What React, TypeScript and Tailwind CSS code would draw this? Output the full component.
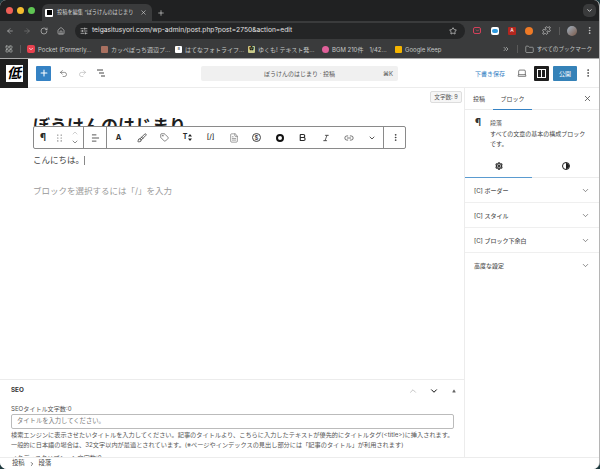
import React from "react";
import { ArrowLeft, ArrowRight, RotateCw, Home, Star, ChevronDown, ChevronUp, ChevronsRight, Folder, Plus, X, MoreVertical, LayoutGrid, SlidersHorizontal, Undo2, Redo2, Laptop, Bold, Italic, Link2, Tag, Brush, Settings, ChevronRight, Puzzle, FileText, Triangle } from "lucide-react";

const font = "font-['Inter','Noto_Sans_CJK_JP',sans-serif]";

function Bookmark({ icon, label, w }: { icon: React.ReactNode; label: string; w: string }) {
  return (
    <div className={`flex items-center gap-[3px] ${w} shrink-0`}>
      {icon}
      <span className="text-[6px] text-[#c4c7c5] whitespace-nowrap">{label}</span>
    </div>
  );
}

function Fav({ c, children }: { c: string; children?: React.ReactNode }) {
  return <span className={`w-[7px] h-[7px] rounded-[1px] flex items-center justify-center text-[5px] text-black shrink-0 ${c}`}>{children}</span>;
}

function Browser() {
  return (
    <div className="bg-[#202122] shrink-0">
      <div className="h-[21px] flex items-end pl-[42px] relative">
        <div className="absolute left-[6px] top-[7px] flex gap-[4px]">
          <span className="w-[7px] h-[7px] rounded-full bg-[#ee5f57]" />
          <span className="w-[7px] h-[7px] rounded-full bg-[#f5bd2f]" />
          <span className="w-[7px] h-[7px] rounded-full bg-[#5fc553]" />
        </div>
        <div className="w-[110px] h-[17px] bg-[#3a3b3c] rounded-t-[6px] flex items-center pl-[3px] pr-[5px] gap-[4px]">
          <span className="w-[8px] h-[8px] bg-white rounded-[1px] flex items-center justify-center shrink-0"><span className="w-[5px] h-[5px] bg-black" /></span>
          <span className="text-[5.2px] text-[#d8d8d8] whitespace-nowrap flex-1">投稿を編集 “ぼうけんのはじまり</span>
          <X size={7} strokeWidth={2} className="text-[#dddddd] shrink-0" />
        </div>
        <Plus size={8} strokeWidth={2} className="text-[#d5d5d5] ml-[5px] mb-[4px]" />
        <div className="absolute right-[3px] top-[4px] w-[13px] h-[13px] rounded-[5px] bg-[#3a3b3c] flex items-center justify-center">
          <ChevronDown size={7} strokeWidth={3} className="text-[#dddddd]" />
        </div>
      </div>
      <div className="h-[19px] bg-[#3a3b3c] flex items-center pl-[6px]">
        <ArrowLeft size={8} strokeWidth={2} className="text-[#b9b9b9]" />
        <ArrowRight size={8} strokeWidth={2} className="text-[#7a7a7a] ml-[9px]" />
        <RotateCw size={8} strokeWidth={2} className="text-[#c9c9c9] ml-[9px]" />
        <Home size={8} strokeWidth={2} className="text-[#c9c9c9] ml-[9px]" />
        <div className="ml-[10px] w-[390px] h-[16px] bg-[#242526] rounded-full flex items-center pl-[5px] pr-[8px]">
          <SlidersHorizontal size={8} strokeWidth={2} className="text-[#d8d8d8]" />
          <span className="ml-[4px] text-[6.7px] text-[#e3e3e3] whitespace-nowrap flex-1">teigasitusyori.com/wp-admin/post.php?post=2750&amp;action=edit</span>
          <Star size={8} strokeWidth={2} className="text-[#e3e3e3]" />
        </div>
        <span className="ml-[8px] w-[8px] h-[7px] rounded-[2px] border border-[#d4405a] flex items-center justify-center"><ChevronDown size={5} strokeWidth={3} className="text-[#e4556a]" /></span>
        <span className="ml-[10px] w-[8px] h-[8px] rounded-[2px] bg-white flex items-center justify-center"><span className="w-[6px] h-[4px] rounded-full bg-[#2f9be0]" /></span>
        <span className="ml-[9px] w-[8px] h-[8px] rounded-[1px] bg-[#b3261e] flex items-center justify-center text-[5px] text-white">A</span>
        <span className="ml-[9px] w-[8px] h-[8px] rounded-full bg-[#ee7a26]" />
        <Puzzle size={9} strokeWidth={1.8} className="ml-[9px] text-[#d8d8d8]" />
        <span className="ml-[8px] w-px h-[8px] bg-[#5a5a5a]" />
        <span className="ml-[7px] w-[10px] h-[10px] rounded-full bg-[linear-gradient(135deg,#9fb1c2,#7c5a48)]" />
        <MoreVertical size={9} strokeWidth={2} className="ml-[8px] text-[#d8d8d8]" />
      </div>
      <div className="h-[18px] bg-[#3a3b3c] flex items-center pl-[5px] pr-[7px]">
        <LayoutGrid size={8} strokeWidth={1.8} className="text-[#c4c7c5] shrink-0" />
        <span className="ml-[7px] mr-[6px] w-px h-[8px] bg-[#5a5a5a] shrink-0" />
        <Bookmark w="w-[74px]" icon={<span className="w-[8px] h-[8px] rounded-[2px] bg-[#e8414f] flex items-center justify-center"><ChevronDown size={6} strokeWidth={3} className="text-white" /></span>} label="Pocket (Formerly..." />
        <Bookmark w="w-[74px]" icon={<Fav c="bg-[#a87060]" />} label="カッペぼっち週辺プ..." />
        <Bookmark w="w-[73px]" icon={<Fav c="bg-white">॥</Fav>} label="はてなフォトライフ..." />
        <Bookmark w="w-[74px]" icon={<Fav c="bg-[#c9c98a]">✿</Fav>} label="ゆくも! テキスト発..." />
        <Bookmark w="w-[73px]" icon={<span className="w-[7px] h-[7px] rounded-full bg-[#e0609a] shrink-0" />} label="BGM 210件　1/42..." />
        <Bookmark w="w-[60px]" icon={<span className="w-[7px] h-[7px] rounded-[1px] bg-[#f4b400] shrink-0" />} label="Google Keep" />
        <ChevronsRight size={8} strokeWidth={2} className="ml-auto text-[#c4c7c5] shrink-0" />
        <span className="mx-[7px] w-px h-[8px] bg-[#5a5a5a] shrink-0" />
        <Folder size={9} strokeWidth={1.6} className="text-[#c4c7c5] shrink-0" />
        <span className="ml-[3px] text-[5.6px] text-[#c4c7c5] whitespace-nowrap">すべてのブックマーク</span>
      </div>
    </div>
  );
}

function Header() {
  return (
    <div className="h-[30px] shrink-0 flex items-center border-t border-t-[#aaaaaa] border-b border-b-[#ececec] bg-white">
      <div className="w-[28px] h-[29px] bg-[#1e1e1e] flex items-center justify-center shrink-0">
        <span className="w-[17px] h-[17px] bg-white flex items-center justify-center text-[14px] leading-none font-bold italic text-black">低</span>
      </div>
      <button className="ml-[8px] w-[15px] h-[15px] bg-[#3582c4] rounded-[1px] flex items-center justify-center"><Plus size={10} strokeWidth={2.5} className="text-white" /></button>
      <Undo2 size={9} strokeWidth={1.5} className="ml-[8px] text-[#444]" />
      <Redo2 size={9} strokeWidth={1.5} className="ml-[10px] text-[#aaa]" />
      <svg width="10" height="8" viewBox="0 0 10 8" className="ml-[9px]" stroke="#444" strokeWidth="1"><path d="M1 1h6M3 4h5M5 7h4" /></svg>
      <div className="ml-[95px] w-[197px] h-[15px] bg-[#f0f0f0] rounded-[2px] flex items-center relative justify-center">
        <span className="text-[6px] text-[#555]">ぼうけんのはじまり · 投稿</span>
        <span className="absolute right-[5px] text-[6px] text-[#555]">⌘K</span>
      </div>
      <span className="ml-[77px] w-[30px] text-[6px] text-[#3582c4] whitespace-nowrap">下書き保存</span>
      <Laptop size={10} strokeWidth={1.5} className="ml-[12px] text-[#333]" />
      <span className="ml-[7px] w-[15px] h-[15px] bg-[#1e1e1e] rounded-[1px] flex items-center justify-center">
        <span className="w-[9px] h-[9px] border border-white flex justify-end"><span className="w-[4px] h-full border-l border-white" /></span>
      </span>
      <button className="ml-[4px] w-[24px] h-[15px] bg-[#3582b8] rounded-[1px] text-[6px] text-white">公開</button>
      <MoreVertical size={10} strokeWidth={2} className="ml-[6px] text-[#444]" />
    </div>
  );
}

function Tool({ children, w = "w-[23px]" }: { children: React.ReactNode; w?: string }) {
  return <div className={`${w} h-full flex items-center justify-center shrink-0 text-[#2a2a2a]`}>{children}</div>;
}

function BlockToolbar() {
  return (
    <div className="absolute left-[33px] top-[38px] w-[373px] h-[23px] bg-white border border-[#8a8a8a] rounded-[2px] flex items-center">
      <div className="flex items-center h-full w-[50px] border-r border-[#8a8a8a] shrink-0">
        <Tool w="w-[18px]"><span className="text-[10px] font-bold">¶</span></Tool>
        <Tool w="w-[15px]">
          <svg width="5" height="8" viewBox="0 0 6 9" fill="#555"><circle cx="1" cy="1" r=".7" /><circle cx="5" cy="1" r=".7" /><circle cx="1" cy="4.5" r=".7" /><circle cx="5" cy="4.5" r=".7" /><circle cx="1" cy="8" r=".7" /><circle cx="5" cy="8" r=".7" /></svg>
        </Tool>
        <Tool w="w-[15px]"><div className="flex flex-col gap-[1px]"><ChevronUp size={8} strokeWidth={1.4} className="text-[#999]" /><ChevronDown size={8} strokeWidth={1.6} /></div></Tool>
      </div>
      <div className="flex items-center justify-center h-full w-[23px] border-r border-[#8a8a8a] shrink-0">
        <svg width="9" height="8" viewBox="0 0 10 9" stroke="#444" strokeWidth="1"><path d="M1 1h5M1 4.5h8M1 8h5" /></svg>
      </div>
      <Tool><span className="text-[7.5px] font-bold">A</span></Tool>
      <Tool><Brush size={10} strokeWidth={1.8} /></Tool>
      <Tool><Tag size={9} strokeWidth={1.5} /></Tool>
      <Tool>
        <span className="flex items-center gap-[1px]">
          <span className="text-[7px] font-bold">T</span>
          <svg width="4" height="7" viewBox="0 0 4 7" fill="#222"><path d="M2 0l2 2.5H0zM2 7L0 4.5h4z" /></svg>
        </span>
      </Tool>
      <Tool><span className="text-[7px] font-medium">[/]</span></Tool>
      <Tool><FileText size={10} strokeWidth={1.5} className="text-[#666]" /></Tool>
      <Tool><span className="w-[9px] h-[9px] rounded-full border border-[#444] flex items-center justify-center text-[6px] font-medium">$</span></Tool>
      <Tool><span className="w-[8px] h-[8px] rounded-full border-[2px] border-[#111]" /></Tool>
      <Tool><Bold size={9} strokeWidth={3} /></Tool>
      <Tool><Italic size={8} strokeWidth={2.2} /></Tool>
      <Tool><Link2 size={10} strokeWidth={1.5} /></Tool>
      <div className="w-[24px] h-full flex items-center justify-center border-r border-[#8a8a8a] shrink-0"><ChevronDown size={8} strokeWidth={2} /></div>
      <Tool><MoreVertical size={9} strokeWidth={2} /></Tool>
    </div>
  );
}

function Editor() {
  return (
    <div className="flex-1 relative overflow-hidden pl-[33px] pt-[26px] bg-white min-h-0">
      <div className="absolute right-[2px] top-[3px] w-[32px] h-[12px] bg-[#f6f6f6] border border-[#dddddd] rounded-[2px] flex items-center justify-center text-[5.6px] text-[#555] whitespace-nowrap">文字数: 9</div>
      <h1 className="text-[17px] leading-[24px] font-bold text-[#1e1e1e] whitespace-nowrap">ぼうけんのはじまり</h1>
      <BlockToolbar />
      <div className="mt-[16px] h-[12px] flex items-center text-[8.5px] text-[#444]">
        <span>こんにちは。</span>
        <span className="ml-[0px] w-px h-[9px] bg-[#888]" />
      </div>
      <p className="mt-[19px] h-[12px] leading-[12px] text-[8.5px] text-[#999] whitespace-nowrap">ブロックを選択するには「/」を入力</p>
    </div>
  );
}

function Seo() {
  return (
    <div className="h-[78px] shrink-0 border-t border-[#ececec] bg-white overflow-hidden pl-[11px] pr-[10px] text-[#555]">
      <div className="h-[22px] flex items-center">
        <span className="text-[6.3px] font-bold text-[#333]">SEO</span>
        <ChevronUp size={10} strokeWidth={1.4} className="ml-auto text-[#999]" />
        <ChevronDown size={10} strokeWidth={2.4} className="ml-[11px] text-[#111]" />
        <Triangle size={4} fill="#666" strokeWidth={0} className="ml-[13px] mr-[-2px] text-[#666]" />
      </div>
      <div className="mt-[2px] h-[10px] leading-[10px] text-[6.1px]">SEOタイトル文字数:0</div>
      <div className="h-[15px] mt-[0px] border border-[#bbbbbb] rounded-[2px] flex items-center pl-[5px] text-[6.3px] text-[#777]">タイトルを入力してください。</div>
      <div className="mt-[1px] leading-[9.5px] text-[6.2px] whitespace-nowrap">検索エンジンに表示させたいタイトルを入力してください。記事のタイトルより、こちらに入力したテキストが優先的にタイトルタグ(&lt;title&gt;)に挿入されます。</div>
      <div className="leading-[9.5px] text-[6.2px] whitespace-nowrap">一般的に日本語の場合は、32文字以内が最適とされています。(※ページやインデックスの見出し部分には「記事のタイトル」が利用されます)</div>
      <div className="mt-[4px] text-[6.1px] leading-[10px]">メタディスクリプション文字数:0</div>
    </div>
  );
}

function PanelRow({ label, last }: { label: string; last?: boolean }) {
  return (
    <div className={`h-[25px] flex items-center pl-[9px] pr-[9px] shrink-0 ${last ? "" : "border-b border-[#efefef]"}`}>
      <span className="text-[6px] text-[#555] font-medium">{label}</span>
      <ChevronDown size={9} strokeWidth={1.6} className="ml-auto text-[#444]" />
    </div>
  );
}

function Sidebar() {
  return (
    <div className="w-[135px] shrink-0 border-l border-[#ececec] bg-white flex flex-col overflow-hidden">
      <div className="h-[22px] flex items-stretch border-b border-[#ececec] relative shrink-0">
        <span className="ml-[8px] w-[12px] flex items-center text-[6px] text-[#444] whitespace-nowrap">投稿</span>
        <span className="ml-[8px] w-[39px] flex items-center justify-center text-[6px] text-[#444] border-b border-[#3582c4] -mb-px">ブロック</span>
        <X size={9} strokeWidth={2} className="ml-auto mr-[7px] self-center text-[#444]" />
      </div>
      <div className="h-[45px] flex pl-[10px] pt-[7px] shrink-0">
        <span className="w-[15px] text-[10px] leading-[11px] font-bold text-[#333]">¶</span>
        <div className="w-[100px]">
          <div className="text-[6px] leading-[12px] text-[#555]">段落</div>
          <div className="text-[6px] leading-[10px] text-[#444]">すべての文章の基本の構成ブロックです。</div>
        </div>
      </div>
      <div className="h-[23px] flex border-b border-[#ececec] shrink-0">
        <div className="w-[67px] flex items-center justify-center border-b border-[#5a9bd0] -mb-px"><Settings size={8} strokeWidth={3.2} className="text-[#1e1e1e]" /></div>
        <div className="flex-1 flex items-center justify-center">
          <span className="w-[8px] h-[8px] rounded-full border border-[#1e1e1e] flex justify-end overflow-hidden"><span className="w-1/2 h-full bg-[#1e1e1e]" /></span>
        </div>
      </div>
      <PanelRow label="[C] ボーダー" />
      <PanelRow label="[C] スタイル" />
      <PanelRow label="[C] ブロック下余白" />
      <PanelRow label="高度な設定" last />
    </div>
  );
}

export default function App() {
  return (
    <div className={`w-[600px] h-[469px] overflow-hidden bg-[#1f3a3f] ${font}`}>
      <div className="w-full h-full rounded-t-[6px] rounded-b-[7px] overflow-hidden flex flex-col bg-white border-r border-[#b5b5b5]">
        <Browser />
        <Header />
        <div className="flex-1 flex min-h-0">
          <div className="flex-1 flex flex-col min-w-0">
            <Editor />
            <Seo />
          </div>
          <Sidebar />
        </div>
        <div className="h-[12px] shrink-0 border-t border-[#ececec] bg-white flex items-center pl-[12px] text-[6.3px] text-[#444]">
          <span>投稿</span>
          <ChevronRight size={6} strokeWidth={3} className="mx-[4px]" />
          <span>段落</span>
        </div>
      </div>
    </div>
  );
}
